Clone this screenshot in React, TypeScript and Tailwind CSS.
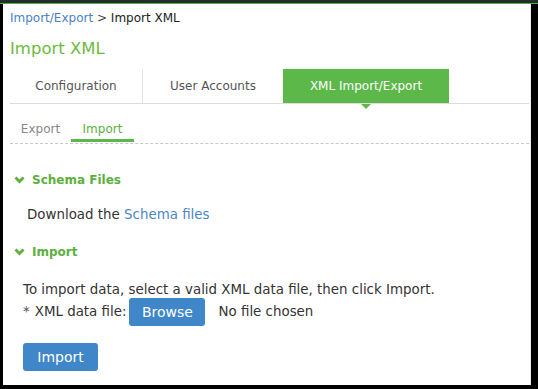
import React from "react";

const font = { fontFamily: '"DejaVu Sans", Verdana, sans-serif' };

const Chevron: React.FC = () => (
    <svg width="11" height="9" viewBox="0 0 11 9" className="mr-[7px]">
        <path d="M0.5 2.6 L2.5 0.6 L5.5 3.6 L8.5 0.6 L10.5 2.6 L5.5 7.6 Z" fill="#5cb03e" />
    </svg>
);

const tabs = ["Configuration", "User Accounts"];

const App: React.FC = () => {
    return (
        <div className="w-[538px] h-[389px] bg-black flex flex-col" style={font}>
            <div className="h-[3px] bg-[#262c32]" />
            <div className="h-px bg-[#4cb13a]" />
            <div className="flex-1 flex pl-[3px] pr-[7px] pb-[4px]">
                <div className="flex-1 bg-white border-r border-[#ececec] pl-[7px] text-[13.4px] text-[#333]">
                    <div className="pt-[6px] h-[27px] leading-[16px] text-[12px]">
                        <span className="text-[#4a7fc8]">Import/Export</span>
                        <span className="text-[#444]"> &gt; </span>
                        <span className="text-[#222]">Import XML</span>
                    </div>
                    <div className="h-[38px] pt-[7px] text-[16.5px] leading-[22px] text-[#6cbb3c]">Import XML</div>

                    <div className="flex border-b border-[#dcdcdc] h-[35px] mr-px text-[12px]">
                        {tabs.map((t, i) => (
                            <div
                                key={t}
                                className={
                                    i === 0
                                        ? "w-[133px] flex items-center justify-center text-[#555] border-r border-[#e2e2e2]"
                                        : "w-[140px] flex items-center justify-center text-[#555]"
                                }
                            >
                                {t}
                            </div>
                        ))}
                        <div className="relative w-[166px] flex items-center justify-center bg-[#5cb848] text-white">
                            XML Import/Export
                            <div className="absolute left-1/2 -bottom-[6px] -translate-x-1/2 w-0 h-0 border-l-[5px] border-r-[5px] border-t-[5px] border-l-transparent border-r-transparent border-t-[#5cb848]" />
                        </div>
                    </div>

                    <div className="flex h-[40px] items-end border-b border-dashed border-[#c8c8c8] mr-px text-[12px] leading-[15px]">
                        <div className="h-[37px] w-[61px] flex items-end justify-center text-[#888] pb-[6px]">Export</div>
                        <div className="h-[37px] w-[63px] flex items-end justify-center text-[#5cb03e] border-b-[3px] border-[#5cb848] mb-px pb-[2px]">
                            Import
                        </div>
                    </div>

                    <div className="flex items-center mt-[28px] pl-[4px] h-[16px] font-bold text-[12px] text-[#5cb03e]">
                        <Chevron />
                        Schema Files
                    </div>
                    <div className="mt-[19px] pl-[17px] h-[16px] leading-[16px]">
                        Download the <span className="text-[#4a86c8]">Schema files</span>
                    </div>
                    <div className="flex items-center mt-[21px] pl-[4px] h-[16px] font-bold text-[12px] text-[#5cb03e]">
                        <Chevron />
                        Import
                    </div>

                    <div className="pl-[13px]">
                        <div className="mt-[22px] h-[16px] leading-[16px]">
                            To import data, select a valid XML data file, then click Import.
                        </div>
                        <div className="flex items-center h-[28px]">
                            <span className="text-[#555]">*</span>
                            <span className="ml-[5px]">XML data file:</span>
                            <button className="ml-[3px] h-[28px] w-[76px] rounded-[3px] bg-[#3f87c9] text-white text-[14px]">Browse</button>
                            <span className="ml-[13px]">No file chosen</span>
                        </div>
                        <button className="mt-[17px] h-[28px] w-[75px] rounded-[3px] bg-[#3f87c9] text-white text-[14px]">Import</button>
                    </div>
                </div>
            </div>
        </div>
    );
};

export default App;
